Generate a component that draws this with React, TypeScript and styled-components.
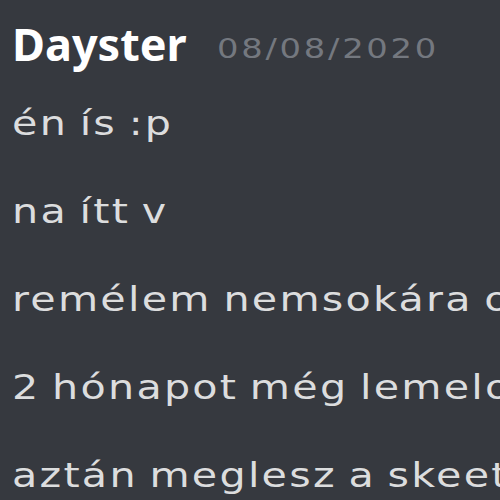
import React from "react";
import styled, { createGlobalStyle } from "styled-components";

const GlobalStyle = createGlobalStyle`
  html, body {
    margin: 0;
    padding: 0;
    background: #36393f;
    overflow: hidden;
  }
`;

const Chat = styled.div`
  width: 500px;
  height: 500px;
  box-sizing: border-box;
  padding: 14px 0 0 12px;
  background: #36393f;
  white-space: nowrap;
  overflow: hidden;
`;

const Header = styled.div`
  display: flex;
  align-items: flex-start;
  gap: 30px;
  height: 66px;
`;

const Username = styled.span`
  color: #ffffff;
  font-family: "Noto Sans", sans-serif;
  font-size: 45px;
  font-weight: 700;
  line-height: 60px;
`;

/* the screenshot is stretched sideways, so the small text is widened */
const Timestamp = styled.span`
  margin-top: 21px;
  color: #74787f;
  font-family: "DejaVu Sans", sans-serif;
  font-size: 27px;
  line-height: 27px;
  letter-spacing: 2.2px;
  transform: scaleX(1.25);
  transform-origin: left center;
`;

const Line = styled.div`
  color: #dcddde;
  font-family: "DejaVu Sans", sans-serif;
  font-size: 33px;
  line-height: 88px;
  height: 88px;
  letter-spacing: 1.8px;
  word-spacing: -3px;
  transform: scaleX(1.25);
  transform-origin: left center;
`;

const messages = [
  "én ís :p",
  "na ítt v",
  "remélem nemsokára ott leszek",
  "2 hónapot még lemelozok",
  "aztán meglesz a skeet",
];

export default function App() {
  return (
    <>
      <GlobalStyle />
      <Chat>
        <Header>
          <Username>Dayster</Username>
          <Timestamp>08/08/2020</Timestamp>
        </Header>
        {messages.map((m) => (
          <Line key={m}>{m}</Line>
        ))}
      </Chat>
    </>
  );
}
